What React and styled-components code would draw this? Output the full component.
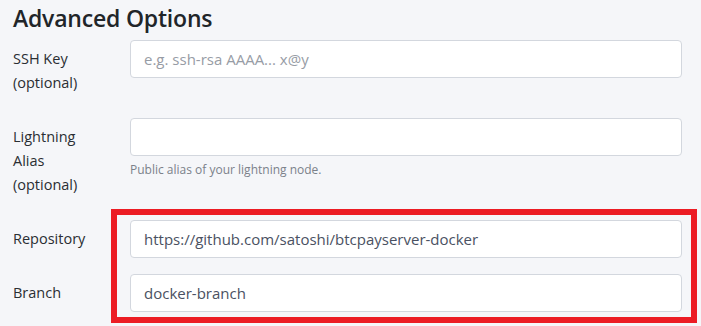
import React from 'react';
import styled, { createGlobalStyle } from 'styled-components'

const GlobalStyle = createGlobalStyle`
    body {
        margin: 0;
        background: #f5f6f9;
        font-family: "Open Sans", "Noto Sans", sans-serif;
        color: #212529;
    }
`

const Page = styled('div')`
    box-sizing: border-box;
    min-height: 326px;
    padding: 3px 19px 0 13px;
`

const Heading = styled('h2')`
    margin: 0 0 7px;
    font-size: 23px;
    font-weight: 600;
    line-height: 30px;
    letter-spacing: -0.2px;
`

const Row = styled('div')`
    display: grid;
    grid-template-columns: 117px 1fr;
    margin-bottom: ${p => p.$last ? '0' : '16px'};
`

const Label = styled('label')`
    padding: 7px 0;
    font-size: 14.5px;
    line-height: 24px;
    color: #2a2e33;
`

const Field = styled('div')`
    display: flex;
    flex-direction: column;
`

const Input = styled('input')`
    box-sizing: border-box;
    height: 38px;
    width: 100%;
    padding: 0 13px;
    border: 1px solid #d3d7de;
    border-radius: 4px;
    background: #fff;
    font-family: inherit;
    font-size: 15px;
    color: #4a5162;
    outline: none;

    &::placeholder {
        color: #979ca5;
    }
`

const Help = styled('small')`
    margin-top: 5px;
    font-size: 12px;
    color: #7b818a;
`

const Highlight = styled('div')`
    position: relative;
`

const Outline = styled('div')`
    position: absolute;
    top: -11px;
    left: 98px;
    right: -15px;
    height: 114px;
    box-sizing: border-box;
    border: 6px solid #ec1c24;
    pointer-events: none;
`

export default function App() {
  return (
    <Page>
        <GlobalStyle />
        <Heading>Advanced Options</Heading>
        <Row>
            <Label>SSH Key<br />(optional)</Label>
            <Field>
                <Input placeholder="e.g. ssh-rsa AAAA... x@y" />
            </Field>
        </Row>
        <Row>
            <Label>Lightning<br />Alias<br />(optional)</Label>
            <Field>
                <Input />
                <Help>Public alias of your lightning node.</Help>
            </Field>
        </Row>
        <Highlight>
            <Row>
                <Label>Repository</Label>
                <Field>
                    <Input defaultValue="https://github.com/satoshi/btcpayserver-docker" />
                </Field>
            </Row>
            <Row $last>
                <Label>Branch</Label>
                <Field>
                    <Input defaultValue="docker-branch" />
                </Field>
            </Row>
            <Outline />
        </Highlight>
    </Page>
  )
}
